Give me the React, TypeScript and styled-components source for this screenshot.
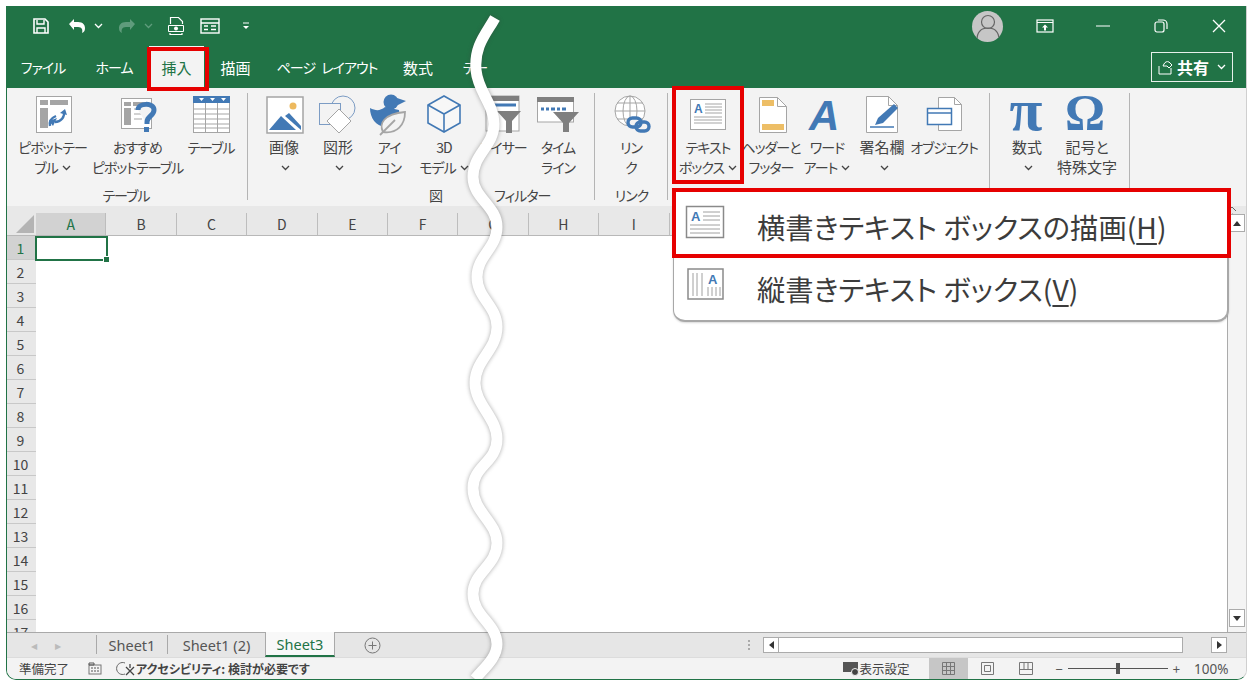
import React, { FC, ReactNode } from 'react'
import styled, { createGlobalStyle } from 'styled-components'

const FONT = `"Noto Sans CJK JP", "Noto Sans", sans-serif`
const GREEN = '#217346'
const BLUE = '#4279b5'
const GRAY = '#a5a5a5'
const RED = '#e60000'

const GlobalStyle = createGlobalStyle`
  html, body { margin: 0; background: #fff; }
  body { font-family: ${FONT}; color: #444; font-feature-settings: "palt"; }
  * { box-sizing: border-box; }
  svg { overflow: visible; }
`

const Page = styled.div`
  width: 1253px;
  height: 686px;
  padding: 6px;
  overflow: hidden;
`
const Window = styled.div`
  position: relative;
  height: 674px;
  display: flex;
  flex-direction: column;
  overflow: hidden;
  background: #f3f3f3;
  border-left: 1px solid ${GREEN};
  border-bottom: 1px solid ${GREEN};
  border-right: 1px solid #cfcfcf;
  border-radius: 0 0 10px 10px;
`

/* title bar */
const TitleBar = styled.div`
  height: 40px;
  flex: none;
  display: flex;
  align-items: center;
  background: ${GREEN};
  padding-left: 25px;
`
const Qat = styled.div<{ $w: number }>`
  width: ${p => p.$w}px;
  display: flex;
  align-items: center;
`
const WinControls = styled.div`
  margin-left: auto;
  margin-right: -2px;
  display: flex;
  align-items: center;
`
const Avatar = styled.div`
  width: 31px;
  height: 31px;
  border-radius: 50%;
  background: #c6c6c6;
  display: flex;
  align-items: center;
  justify-content: center;
  overflow: hidden;
  margin-right: 13px;
`
const WinBtn = styled.div`
  width: 58px;
  display: flex;
  justify-content: center;
`

/* tabs */
const TabBar = styled.div`
  height: 42px;
  flex: none;
  display: flex;
  align-items: center;
  background: ${GREEN};
`
const Tab = styled.div<{ $w: number; $active?: boolean; $kana?: boolean }>`
  position: relative;
  width: ${p => p.$w}px;
  height: 100%;
  display: flex;
  align-items: center;
  justify-content: center;
  font-size: ${p => (p.$kana ? 14 : 15)}px;
  letter-spacing: ${p => (p.$kana ? -1 : 0)}px;
  word-spacing: 4px;
  white-space: pre;
  color: ${p => (p.$active ? '#217346' : '#fff')};
  background: ${p => (p.$active ? '#f3f3f3' : 'transparent')};
`
const Share = styled.div`
  margin-left: auto;
  margin-right: 13px;
  width: 82px;
  height: 30px;
  border: 1px solid #e8f0eb;
  display: flex;
  align-items: center;
  justify-content: center;
  gap: 4px;
  color: #fff;
  font-size: 16px;
  font-weight: 700;
`
const RedFrame = styled.div<{ $t: number; $r: number; $b: number; $l: number }>`
  position: absolute;
  top: ${p => p.$t}px;
  right: ${p => p.$r}px;
  bottom: ${p => p.$b}px;
  left: ${p => p.$l}px;
  border: 4px solid ${RED};
  z-index: 5;
  pointer-events: none;
`

/* ribbon */
const Ribbon = styled.div`
  height: 118px;
  flex: none;
  display: flex;
  background: #f3f3f3;
`
const Group = styled.div<{ $w: number; $pad?: number }>`
  position: relative;
  width: ${p => p.$w}px;
  padding-left: ${p => p.$pad ?? 0}px;
  padding-top: 5px;
  display: flex;
  flex-direction: column;
  &::after {
    content: '';
    position: absolute;
    right: 0;
    top: 5px;
    bottom: 6px;
    width: 1px;
    background: #b4b4b4;
  }
`
const Buttons = styled.div`
  display: flex;
  height: 93px;
`
const RibbonBtn = styled.div<{ $w: number }>`
  position: relative;
  width: ${p => p.$w}px;
  flex: none;
  display: flex;
  flex-direction: column;
  align-items: center;
`
const IconSlot = styled.div`
  height: 41px;
  display: flex;
  align-items: center;
  justify-content: center;
`
const BtnLabel = styled.div<{ $kanji?: boolean }>`
  font-size: ${p => (p.$kanji ? 15 : 14)}px;
  letter-spacing: ${p => (p.$kanji ? 0 : -1)}px;
  line-height: 20px;
  color: #444;
  text-align: center;
  white-space: nowrap;
  margin-top: 3px;
`
const GroupLabels = styled.div<{ $start?: boolean }>`
  display: flex;
  justify-content: ${p => (p.$start ? 'flex-start' : 'center')};
  font-size: 14px;
  letter-spacing: -1px;
  line-height: 18px;
  color: #444;
`
const GroupLabel = styled.div<{ $ml?: number; $mr?: number }>`
  margin-left: ${p => p.$ml ?? 0}px;
  margin-right: ${p => p.$mr ?? 0}px;
  white-space: nowrap;
`
const Collapse = styled.div`
  position: absolute;
  right: 9px;
  top: 187px;
`

/* sheet */
const ColHeader = styled.div`
  height: 30px;
  flex: none;
  display: flex;
  align-items: flex-end;
  background: #e8e8e8;
  padding-top: 7px;
  overflow: hidden;
  border-bottom: 1px solid #b8b8b8;
`
const Corner = styled.div`
  width: 29px;
  flex: none;
  height: 100%;
  display: flex;
  align-items: flex-end;
  justify-content: flex-end;
  padding: 0 2px 2px 0;
`
const ColCell = styled.div<{ $sel?: boolean }>`
  width: 70.4px;
  flex: none;
  height: 100%;
  display: flex;
  align-items: center;
  justify-content: center;
  font-size: 14px;
  color: ${p => (p.$sel ? '#217346' : '#444')};
  background: ${p => (p.$sel ? '#d2d2d2' : 'transparent')};
  border-right: 1px solid #bdbdbd;
`
const SheetBody = styled.div`
  flex: 1;
  min-height: 0;
  display: flex;
  background: #fff;
`
const RowHeader = styled.div`
  width: 29px;
  flex: none;
  overflow: hidden;
  background: #e8e8e8;
`
const RowCell = styled.div<{ $sel?: boolean }>`
  height: 24px;
  display: flex;
  align-items: center;
  justify-content: center;
  padding-right: 2px;
  font-size: 14px;
  color: ${p => (p.$sel ? '#217346' : '#444')};
  background: ${p => (p.$sel ? '#d2d2d2' : 'transparent')};
  border-bottom: 1px solid #c8c8c8;
`
const Cells = styled.div`
  flex: 1;
  margin-left: -1px;
`
const ActiveCell = styled.div`
  position: relative;
  width: 73px;
  height: 25px;
  border: 2px solid ${GREEN};
  &::after {
    content: '';
    position: absolute;
    right: -4px;
    bottom: -4px;
    width: 5px;
    height: 5px;
    background: ${GREEN};
    border: 1px solid #fff;
  }
`
const VScroll = styled.div`
  position: relative;
  width: 19px;
  flex: none;
  display: flex;
  flex-direction: column;
  justify-content: space-between;
  align-items: center;
  padding: 0 2px 5px 1px;
  margin-top: -22px;
  background: #f4f4f4;
  border-left: 1px solid #ababab;
`
const ArrowBtn = styled.div`
  width: 16px;
  height: 18px;
  background: #fff;
  border: 1px solid #ababab;
  display: flex;
  align-items: center;
  justify-content: center;
`

/* sheet tabs */
const TabsRow = styled.div`
  height: 25px;
  flex: none;
  display: flex;
  align-items: stretch;
  background: #e6e6e6;
  border-top: 1px solid #a9a9a9;
  font-family: "Noto Sans", sans-serif;
`
const NavArrows = styled.div`
  width: 89px;
  flex: none;
  display: flex;
  align-items: center;
  gap: 18px;
  padding-left: 24px;
  color: #bbb;
  font-size: 8px;
`
const SheetTab = styled.div<{ $w: number; $active?: boolean }>`
  width: ${p => p.$w}px;
  flex: none;
  display: flex;
  align-items: center;
  justify-content: center;
  font-size: 14.5px;
  color: ${p => (p.$active ? GREEN : '#555')};
  background: ${p => (p.$active ? '#f8f8f8' : 'transparent')};
  border-left: 1px solid #a9a9a9;
  border-right: ${p => (p.$active ? '1px solid #a9a9a9' : 'none')};
  border-bottom: ${p => (p.$active ? `2px solid ${GREEN}` : 'none')};
  margin: ${p => (p.$active ? '-1px 0 0' : '2px 0 3px')};
`
const AddSheet = styled.div`
  margin-left: 29px;
  display: flex;
  align-items: center;
`
const HScroll = styled.div`
  margin-left: auto;
  display: flex;
  align-items: center;
  padding-right: 19px;
`
const Dots = styled.div`
  width: 2px;
  height: 11px;
  margin-right: 13px;
  background: repeating-linear-gradient(#aaa 0 2px, transparent 2px 4px);
`
const HArrow = styled.div`
  width: 16px;
  height: 16px;
  background: #fff;
  border: 1px solid #ababab;
  display: flex;
  align-items: center;
  justify-content: center;
`
const HTrack = styled.div`
  width: 404px;
  height: 16px;
  background: #fff;
  border: 1px solid #ababab;
  border-left: none;
  margin-right: 28px;
`

/* status bar */
const StatusBar = styled.div`
  height: 22px;
  flex: none;
  display: flex;
  align-items: center;
  background: #f3f3f3;
  color: #444;
  padding-left: 12px;
  border-top: 1px solid #dcdcdc;
`
const StatusText = styled.span<{ $bold?: boolean; $ml?: number; $mr?: number }>`
  display: flex;
  align-items: center;
  white-space: nowrap;
  font-weight: ${p => (p.$bold ? 700 : 400)};
  margin-left: ${p => p.$ml ?? 0}px;
  margin-right: ${p => p.$mr ?? 0}px;
  font-size: ${p => (p.$bold ? 12 : 12.5)}px;
`
const StatusRight = styled.div`
  margin-left: auto;
  height: 100%;
  display: flex;
  align-items: center;
`
const ViewBtn = styled.div<{ $active?: boolean }>`
  width: 39px;
  height: 100%;
  display: flex;
  align-items: center;
  justify-content: center;
  background: ${p => (p.$active ? '#c6c6c6' : 'transparent')};
`
const Zoom = styled.div`
  display: flex;
  align-items: center;
  margin-left: 10px;
  color: #555;
  font-size: 13px;
`
const ZoomTrack = styled.div`
  position: relative;
  width: 100px;
  height: 1px;
  margin: 0 5px;
  background: #555;
  &::after {
    content: '';
    position: absolute;
    left: 48px;
    top: -5px;
    width: 4px;
    height: 11px;
    background: #555;
  }
`
const ZoomPct = styled.div`
  width: 66px;
  padding-left: 14px;
  font-size: 13.5px;
  font-family: "Noto Sans", sans-serif;
  color: #555;
`

/* drop down */
const Menu = styled.div`
  position: absolute;
  left: 666px;
  top: 184px;
  width: 556px;
  height: 132px;
  background: #fff;
  border: 1px solid #a8a8a8;
  border-width: 0 2px 2px 1px;
  border-radius: 0 0 12px 12px;
  box-shadow: 0 1px 2px rgba(0, 0, 0, 0.15);
  z-index: 4;
`
const MenuItem = styled.div<{ $h: number }>`
  position: relative;
  height: ${p => p.$h}px;
  display: flex;
  align-items: center;
  padding-left: 11px;
  font-size: 28.3px;
  color: #3c3c3c;
  white-space: nowrap;
`
const MenuIcon = styled.div`
  width: 72px;
  flex: none;
  display: flex;
  margin-top: -9px;
`
const Accel = styled.span`
  text-decoration: underline;
  text-decoration-thickness: 2px;
  text-underline-offset: 4px;
`
const Wave = styled.svg`
  position: absolute;
  left: -7px;
  top: -6px;
  z-index: 6;
  pointer-events: none;
  filter: drop-shadow(0 0 2px rgba(60, 60, 60, 0.45));
`

const Chev: FC<{ color?: string; ml?: number }> = ({ color = '#444', ml = 4 }) => (
  <svg width="9" height="6" viewBox="0 0 9 6" style={{ marginLeft: ml, verticalAlign: 2 }}>
    <path d="M1 1l3.5 3.500L8 1" fill="none" stroke={color} strokeWidth="1.300" />
  </svg>
)

const Ico: FC<{ w?: number; h?: number; children: ReactNode }> = ({ w = 40, h = 40, children }) => (
  <svg width={w} height={h} viewBox={`0 0 ${w} ${h}`} fill="none">{children}</svg>
)

const icons: Record<string, ReactNode> = {
  pivot: (
    <Ico>
      <rect x="3.500" y="2.500" width="35" height="36" fill="#fff" stroke={GRAY} />
      <path d="M7 6h8v5H7zM17 6h18v5H17zM7 14h8v20H7z" fill={GRAY} />
      <path d="M31 17c1 6-3 11-9 11M17 32c-1-5 1-8 6-10" stroke={BLUE} strokeWidth="2.400" />
      <path d="M27 19l5-4 2 6zM24 24l-4 8-4-5z" fill={BLUE} />
    </Ico>
  ),
  recommend: (
    <Ico>
      <rect x="3.500" y="4.500" width="30" height="30" fill="#fff" stroke={GRAY} />
      <path d="M6 8h7v4H6zM15 8h16v4H15zM6 14h7v17H6z" fill={GRAY} />
      <path d="M16 15h11M16 20h8M16 25h8" stroke={GRAY} />
      <path d="M20 16c0-7 16-8 16 0 0 6-7 6-7 12v2" stroke={BLUE} strokeWidth="5" fill="#f3f3f3" />
      <rect x="26" y="33" width="5" height="5" fill={BLUE} />
    </Ico>
  ),
  table: (
    <Ico>
      <rect x="2.500" y="2.500" width="36" height="36" fill="#fff" stroke={GRAY} />
      <rect x="2" y="2" width="37" height="7" fill={BLUE} />
      <path d="M8 4h5l-2.500 3zM19 4h5l-2.500 3zM30 4h5l-2.500 3z" fill="#fff" />
      <path d="M3 15h35M3 20h35M3 25h35M3 30h35M3 34h35M14.500 9v29M26.500 9v29" stroke={GRAY} />
    </Ico>
  ),
  image: (
    <Ico>
      <rect x="3" y="3" width="36" height="36" fill="#fff" stroke={GRAY} strokeWidth="1.500" />
      <circle cx="29" cy="12" r="3.500" fill="#edb95e" />
      <path d="M5 36l12-14 15 14z" fill={BLUE} />
      <path d="M21 22l4-3 12 13v4z" fill={BLUE} />
    </Ico>
  ),
  shape: (
    <Ico>
      <circle cx="25" cy="14" r="12" fill="#f3f3f3" stroke="#7c9cc4" />
      <rect x="1.500" y="9.500" width="21" height="21" fill="#f3f3f3" stroke="#7c9cc4" />
      <path d="M21 15l12 12-12 12L9 27z" fill="#fff" stroke={GRAY} />
    </Ico>
  ),
  iconSet: (
    <Ico>
      <circle cx="22" cy="8" r="7.500" fill={BLUE} />
      <path d="M28 4l9 3-8 4z" fill={BLUE} />
      <path d="M1 14c6 3 10 3 15-1l14 3c2 8-5 15-14 17C7 32 1 24 1 14z" fill={BLUE} />
      <path d="M14 38c-4-8 0-18 22-20 0 13-8 22-22 20z" fill="#f3f3f3" stroke={GRAY} strokeWidth="1.800" />
      <path d="M11 41l15-15" stroke={GRAY} strokeWidth="1.800" />
    </Ico>
  ),
  cube: (
    <Ico>
      <path d="M20 2l16 9v18l-16 9-16-9V11z" fill="#f7f7f7" stroke={BLUE} strokeWidth="1.600" />
      <path d="M4 11l16 9 16-9M20 20v18" stroke={BLUE} strokeWidth="1.600" />
    </Ico>
  ),
  slicer: (
    <Ico>
      <rect x="3" y="2" width="33" height="35" fill="#fff" stroke={GRAY} />
      <rect x="3" y="2" width="33" height="5" fill="#7f7f7f" />
      <path d="M7 11h26" stroke={BLUE} strokeWidth="3" />
      <path d="M14 17h24l-9 10v12h-6V27z" fill="#7f7f7f" />
    </Ico>
  ),
  timeline: (
    <Ico w={44}>
      <rect x="1.500" y="4" width="36" height="24" fill="#fff" stroke={GRAY} />
      <rect x="1" y="3" width="37" height="5" fill="#7f7f7f" />
      <path d="M5 15h3M10 15h3M15 15h4M21 15h3M26 15h4" stroke={BLUE} strokeWidth="3" />
      <path d="M17 18h26l-10 11v9h-6v-9z" fill="#7f7f7f" />
    </Ico>
  ),
  link: (
    <Ico>
      <circle cx="19" cy="17" r="15" fill="#fff" stroke={GRAY} />
      <ellipse cx="19" cy="17" rx="7" ry="15" stroke={GRAY} />
      <path d="M4 17h30M6 9h26M6 25h26M19 2v30" stroke={GRAY} />
      <rect x="17" y="24" width="13" height="9" rx="4.500" stroke={BLUE} strokeWidth="3.400" fill="#f3f3f3" />
      <rect x="25" y="28" width="13" height="9" rx="4.500" stroke={BLUE} strokeWidth="3.400" />
    </Ico>
  ),
  textbox: (
    <Ico>
      <rect x="2.500" y="5.500" width="35" height="30" fill="#fff" stroke={GRAY} />
      <text x="6" y="19" fontFamily="Liberation Sans" fontWeight="700" fontSize="12" fill={BLUE}>A</text>
      <path d="M17 10h17M17 13h17M17 16h17M17 19h17M6 23h28M6 26h28M6 29h28" stroke={GRAY} />
    </Ico>
  ),
  header: (
    <Ico>
      <path d="M8.500 3.500h18l9 9v26h-27z" fill="#fff" stroke={GRAY} />
      <path d="M26.500 3.500v9h9" stroke={GRAY} />
      <path d="M11 6h12v6H11zM11 30h22v6H11z" fill="#edbe66" />
    </Ico>
  ),
  wordart: (
    <Ico w={44}>
      <text x="4" y="36" fontFamily="Liberation Sans" fontWeight="700" fontStyle="italic" fontSize="42" fill={BLUE}>A</text>
    </Ico>
  ),
  sign: (
    <Ico>
      <path d="M4.500 2.500h22l9 9v27h-31z" fill="#fff" stroke={GRAY} />
      <path d="M26.500 2.500v9h9" stroke={GRAY} />
      <path d="M8 33h24" stroke={BLUE} strokeWidth="1.500" />
      <path d="M13 31l3-7 16-14 4 4-15 15z" fill={BLUE} />
    </Ico>
  ),
  object: (
    <Ico>
      <path d="M14.500 3.500h16l7 7v26h-23z" fill="#fff" stroke={GRAY} />
      <path d="M30.500 3.500v7h7" stroke={GRAY} />
      <rect x="3.500" y="14.500" width="24" height="16" fill="#fff" stroke={BLUE} strokeWidth="1.500" />
      <path d="M4 19h23" stroke={BLUE} strokeWidth="1.500" />
    </Ico>
  ),
  pi: (
    <Ico>
      <text x="19" y="36" textAnchor="middle" fontFamily="Liberation Serif" fontWeight="700" fontSize="60" fill={BLUE}>π</text>
    </Ico>
  ),
  omega: (
    <Ico>
      <text x="18" y="35" textAnchor="middle" fontFamily="Liberation Serif" fontWeight="700" fontSize="50" fill={BLUE}>Ω</text>
    </Ico>
  ),
}

interface BtnProps {
  w: number
  icon: string
  lines: string[]
  chev?: boolean
  kanji?: boolean
  frame?: boolean
}

const Btn: FC<BtnProps> = ({ w, icon, lines, chev, kanji, frame }) => (
  <RibbonBtn $w={w}>
    <IconSlot>{icons[icon]}</IconSlot>
    <BtnLabel $kanji={kanji}>
      {lines[0]}
      <br />
      {lines[1]}
      {chev && <Chev />}
    </BtnLabel>
    {frame && <RedFrame $t={-7} $r={4} $b={2} $l={4} />}
  </RibbonBtn>
)

// columns past I sit behind the open menu, only their cells show above it
const COLS = ['A', 'B', 'C', 'D', 'E', 'F', 'G', 'H', 'I', '', '', '', '', '', '', '', '']
const ROWS = Array.from({ length: 17 }, (_, i) => i + 1)

const App: FC = () => (
  <Page>
    <GlobalStyle />
    <Window>
      <TitleBar>
        <Qat $w={35}>
          <Ico w={18} h={18}>
            <path d="M2 2h11l3 3v11H2z" stroke="#fff" strokeWidth="1.600" />
            <path d="M5 3v4h7V3M5 16v-5h8v5" stroke="#fff" strokeWidth="1.400" />
          </Ico>
        </Qat>
        <Qat $w={50}>
          <Ico w={20} h={16}>
            <path d="M2 6l5-5v3h4c5 0 7 3 7 6s-1 4-3 5c1-3 0-6-4-6H7v3z" fill="#fff" />
          </Ico>
          <Chev color="#fff" ml={7} />
        </Qat>
        <Qat $w={50}>
          <Ico w={20} h={16}>
            <path d="M18 6l-5-5v3H9C4 4 2 7 2 10s1 4 3 5c-1-3 0-6 4-6h4v3z" fill="#5f9c7c" />
          </Ico>
          <Chev color="#5f9c7c" ml={7} />
        </Qat>
        <Qat $w={33}>
          <Ico w={18} h={20}>
            <path d="M3.500 8V1.500h8l4 4V8M3 17v1.500h12V17" stroke="#fff" strokeWidth="1.200" />
            <path d="M1.500 9.500h15v6h-15z" stroke="#fff" />
            <circle cx="9" cy="12.500" r="2" fill="#fff" />
          </Ico>
        </Qat>
        <Qat $w={42}>
          <Ico w={20} h={16}>
            <rect x="1" y="1" width="18" height="14" stroke="#fff" strokeWidth="1.400" />
            <path d="M1 5h18M4 8h4M11 8h5M4 11.500h4M11 11.500h5" stroke="#fff" strokeWidth="1.400" />
          </Ico>
        </Qat>
        <Qat $w={30}>
          <Ico w={8} h={8}>
            <path d="M1 1h6" stroke="#fff" />
            <path d="M1 4h6L4 7z" fill="#fff" />
          </Ico>
        </Qat>
        <WinControls>
          <Avatar>
            <Ico w={24} h={24}>
              <circle cx="12" cy="8" r="6.500" stroke="#666" strokeWidth="1.200" />
              <path d="M1 26c0-8 4-12 11-12s11 4 11 12" stroke="#666" strokeWidth="1.200" />
            </Ico>
          </Avatar>
          <WinBtn>
            <Ico w={18} h={14}>
              <rect x="1" y="1" width="16" height="12" stroke="#fff" strokeWidth="1.200" />
              <path d="M1 3.500h16" stroke="#fff" strokeWidth="1.200" />
              <path d="M9 5.500l3 3H10v3H8v-3H6z" fill="#fff" />
            </Ico>
          </WinBtn>
          <WinBtn>
            <Ico w={14} h={2}><path d="M0 1h14" stroke="#fff" strokeWidth="1.200" /></Ico>
          </WinBtn>
          <WinBtn>
            <Ico w={14} h={14}>
              <rect x="1" y="3" width="9" height="10" rx="2" stroke="#fff" strokeWidth="1.200" />
              <path d="M4 1h5a4 4 0 0 1 4 4v5" stroke="#fff" strokeWidth="1.200" />
            </Ico>
          </WinBtn>
          <WinBtn>
            <Ico w={14} h={14}><path d="M1 1l12 12M13 1L1 13" stroke="#fff" strokeWidth="1.300" /></Ico>
          </WinBtn>
        </WinControls>
      </TitleBar>

      <TabBar>
        <Tab $w={72} $kana>ファイル</Tab>
        <Tab $w={70} $kana>ホーム</Tab>
        <Tab $w={55} $active>
          挿入
          <RedFrame $t={1} $r={-5} $b={-3} $l={-2} />
        </Tab>
        <Tab $w={63}>描画</Tab>
        <Tab $w={120} $kana>ページ レイアウト</Tab>
        <Tab $w={62}>数式</Tab>
        <Tab $w={52} $kana>テー</Tab>
        <Share>
          <Ico w={15} h={15}>
            <path d="M1 6v8h12V8M5 6l1-2c1-2 3-3 5-2l3 3-3 3-2-2H5z" stroke="#fff" />
          </Ico>
          共有
          <Chev color="#fff" />
        </Share>
      </TabBar>

      <Ribbon>
        <Group $w={241} $pad={7}>
          <Buttons>
            <Btn w={77} icon="pivot" lines={['ピボットテー', 'ブル']} chev />
            <Btn w={93} icon="recommend" lines={['おすすめ', 'ピボットテーブル']} />
            <Btn w={54} icon="table" lines={['テーブル', '']} />
          </Buttons>
          <GroupLabels><GroupLabel $mr={10}>テーブル</GroupLabel></GroupLabels>
        </Group>
        <Group $w={347} $pad={10}>
          <Buttons>
            <Btn w={52} icon="image" lines={['画像', '']} chev kanji />
            <Btn w={56} icon="shape" lines={['図形', '']} chev kanji />
            <Btn w={46} icon="iconSet" lines={['アイ', 'コン']} />
            <Btn w={64} icon="cube" lines={['3D', 'モデル']} chev />
            <Btn w={54} icon="slicer" lines={['ライサー', '']} />
            <Btn w={56} icon="timeline" lines={['タイム', 'ライン']} />
          </Buttons>
          <GroupLabels $start>
            <GroupLabel $ml={171}>図</GroupLabel>
            <GroupLabel $ml={52}>フィルター</GroupLabel>
          </GroupLabels>
        </Group>
        <Group $w={73}>
          <Buttons>
            <Btn w={72} icon="link" lines={['リン', 'ク']} />
          </Buttons>
          <GroupLabels><GroupLabel>リンク</GroupLabel></GroupLabels>
        </Group>
        <Group $w={322}>
          <Buttons>
            <Btn w={80} icon="textbox" lines={['テキスト', 'ボックス']} chev frame />
            <Btn w={46} icon="header" lines={['ヘッダーと', 'フッター']} />
            <Btn w={66} icon="wordart" lines={['ワード', 'アート']} chev />
            <Btn w={44} icon="sign" lines={['署名欄', '']} chev kanji />
            <Btn w={80} icon="object" lines={['オブジェクト', '']} />
          </Buttons>
        </Group>
        <Group $w={140} $pad={6}>
          <Buttons>
            <Btn w={62} icon="pi" lines={['数式', '']} chev kanji />
            <Btn w={58} icon="omega" lines={['記号と', '特殊文字']} kanji />
          </Buttons>
        </Group>
      </Ribbon>
      <Collapse>
        <Ico w={10} h={6}><path d="M1 5l4-4 4 4" stroke="#666" /></Ico>
      </Collapse>

      <ColHeader>
        <Corner>
          <Ico w={18} h={18}><path d="M18 0v18H0z" fill="#b4b4b4" /></Ico>
        </Corner>
        {COLS.map((c, i) => (
          <ColCell key={i} $sel={i === 0}>{c}</ColCell>
        ))}
      </ColHeader>
      <SheetBody>
        <RowHeader>
          {ROWS.map(r => (
            <RowCell key={r} $sel={r === 1}>{r}</RowCell>
          ))}
        </RowHeader>
        <Cells>
          <ActiveCell />
        </Cells>
        <VScroll>
          <ArrowBtn>
            <Ico w={8} h={5}><path d="M4 0l4 5H0z" fill="#333" /></Ico>
          </ArrowBtn>
          <ArrowBtn>
            <Ico w={8} h={5}><path d="M4 5l4-5H0z" fill="#333" /></Ico>
          </ArrowBtn>
        </VScroll>
      </SheetBody>

      <TabsRow>
        <NavArrows>
          <span>◀</span>
          <span>▶</span>
        </NavArrows>
        <SheetTab $w={71}>Sheet1</SheetTab>
        <SheetTab $w={98}>Sheet1 (2)</SheetTab>
        <SheetTab $w={70} $active>Sheet3</SheetTab>
        <AddSheet>
          <Ico w={17} h={17}>
            <circle cx="8.500" cy="8.500" r="7.500" stroke="#777" />
            <path d="M8.500 4.500v8M4.500 8.500h8" stroke="#777" />
          </Ico>
        </AddSheet>
        <HScroll>
          <Dots />
          <HArrow>
            <Ico w={5} h={8}><path d="M0 4l5-4v8z" fill="#333" /></Ico>
          </HArrow>
          <HTrack />
          <HArrow>
            <Ico w={5} h={8}><path d="M5 4L0 0v8z" fill="#333" /></Ico>
          </HArrow>
        </HScroll>
      </TabsRow>

      <StatusBar>
        <StatusText>準備完了</StatusText>
        <StatusText $ml={19}>
          <Ico w={14} h={13}>
            <rect x="1" y="3" width="12" height="9" stroke="#777" />
            <path d="M1 3h5V1H1zM3 6h2M6 6h2M9 6h2M3 9h2M6 9h2M9 9h2" stroke="#555" />
          </Ico>
        </StatusText>
        <StatusText $ml={16}>
          <Ico w={18} h={15}>
            <path d="M7 2a6 6 0 1 0 0 11" stroke="#666" />
            <path d="M8 6l8 8M16 6l-8 8M12 3v4" stroke="#444" strokeWidth="1.300" />
          </Ico>
        </StatusText>
        <StatusText $bold>アクセシビリティ: 検討が必要です</StatusText>
        <StatusRight>
          <StatusText>
            <Ico w={17} h={14}>
              <rect x="0" y="0" width="15" height="10" fill="#555" />
              <circle cx="12" cy="10" r="3.500" fill="#444" stroke="#f3f3f3" />
            </Ico>
          </StatusText>
          <StatusText $mr={19}>表示設定</StatusText>
          <ViewBtn $active>
            <Ico w={13} h={13}>
              <path d="M.5.500h12v12H.500zM.5 4.500h12M.5 8.500h12M4.500.500v12M8.500.500v12" stroke="#777" />
            </Ico>
          </ViewBtn>
          <ViewBtn>
            <Ico w={13} h={13}>
              <path d="M.5.500h12v12H.500zM3.500 3.500h6v6h-6z" stroke="#777" />
            </Ico>
          </ViewBtn>
          <ViewBtn>
            <Ico w={14} h={13}>
              <path d="M.5.500h13v12H.500zM.5 7.500h13M5 .500v7M9 .500v7" stroke="#777" />
            </Ico>
          </ViewBtn>
          <Zoom>
            −
            <ZoomTrack />
            +
          </Zoom>
          <ZoomPct>100%</ZoomPct>
        </StatusRight>
      </StatusBar>

      <Menu>
        <MenuItem $h={72}>
          <MenuIcon>
            <Ico w={40} h={34}>
              <rect x="1.500" y="1.500" width="37" height="31" fill="#fff" stroke="#8a8a8a" strokeWidth="1.500" />
              <text x="6" y="16" fontFamily="Liberation Sans" fontWeight="700" fontSize="13" fill={BLUE}>A</text>
              <path d="M18 7h17M18 11h17M18 15h17M5 20h30M5 24h30M5 28h30" stroke="#a0a0a0" />
            </Ico>
          </MenuIcon>
          横書きテキスト ボックスの描画(<Accel>H</Accel>)
          <RedFrame $t={-2} $r={-4} $b={4} $l={-2} />
        </MenuItem>
        <MenuItem $h={52}>
          <MenuIcon>
            <Ico w={40} h={34}>
              <rect x="3" y="2" width="35" height="30" fill="#fff" stroke="#8a8a8a" strokeWidth="1.500" />
              <path d="M8 6v23M12 6v23M17 6v23M23 20v9M27 20v9M31 20v9M35 20v9" stroke="#a0a0a0" />
              <text x="23" y="17" fontFamily="Liberation Sans" fontWeight="700" fontSize="13" fill={BLUE}>A</text>
            </Ico>
          </MenuIcon>
          縦書きテキスト ボックス(<Accel>V</Accel>)
        </MenuItem>
      </Menu>

      <Wave width="1253" height="686" viewBox="0 0 1253 686" fill="none">
        <path
          d="M495 18C486 34 474 46 476 70C478 92 494 104 494 124C494 146 473 154 473 177C473 198 497 206 497 227C497 248 477 256 477 277C477 298 497 306 497 327C497 350 475 360 475 383C475 404 497 418 497 439C497 462 473 466 473 488C473 512 497 522 497 543C497 566 473 572 473 594C473 616 497 624 497 644C497 658 484 668 475 679"
          stroke="#fff"
          strokeWidth="11"
        />
      </Wave>
    </Window>
  </Page>
)

export default App
